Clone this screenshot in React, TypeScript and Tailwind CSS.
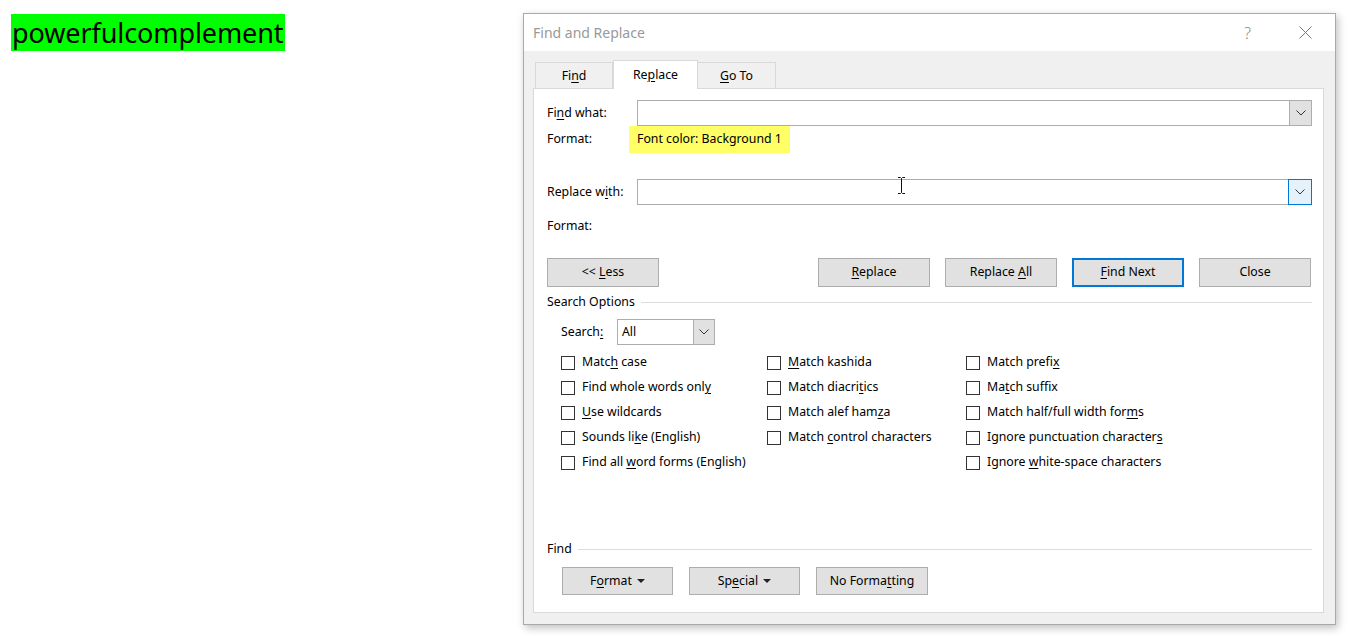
import React from "react";

const U = ({ children }: { children: React.ReactNode }) => (
  <span className="underline decoration-[1px] underline-offset-[2px]">{children}</span>
);

const Chevron = () => (
  <svg width="10" height="6" viewBox="0 0 10 6">
    <polyline points="0.5,0.5 5,5 9.5,0.5" fill="none" stroke="#333" strokeWidth="1" />
  </svg>
);

const Caret = () => (
  <svg width="8" height="4" viewBox="0 0 8 4" className="ml-[5px] inline-block">
    <polygon points="0,0 8,0 4,4" fill="#222" />
  </svg>
);

const Btn = ({
  children,
  w = "w-[112px]",
  h = "h-[29px]",
  focus = false,
}: {
  children: React.ReactNode;
  w?: string;
  h?: string;
  focus?: boolean;
}) => (
  <div
    className={`${w} ${h} flex items-center justify-center bg-[#e1e1e1] ${
      focus ? "border-2 border-[#0078d7]" : "border border-[#adadad]"
    } text-black`}
  >
    <span className="inline-flex items-center whitespace-pre">{children}</span>
  </div>
);

const Check = ({ children }: { children: React.ReactNode }) => (
  <div className="h-[25px] flex items-center">
    <div className="w-[14px] h-[14px] border border-[#333] bg-white mr-[7px] shrink-0" />
    <span className="text-black whitespace-pre">{children}</span>
  </div>
);

const Combo = ({ focus = false }: { focus?: boolean }) => (
  <div className="flex-1 h-[26px] flex border border-[#adadad] bg-white">
    <div className="flex-1" />
    <div
      className={`w-[22px] h-full flex items-center justify-center ${
        focus ? "bg-[#e5f1fb] outline outline-1 outline-[#0078d7]" : "bg-[#e1e1e1] border-l border-[#adadad]"
      }`}
    >
      <Chevron />
    </div>
  </div>
);

export default function App() {
  return (
    <div
      className="relative w-[1358px] h-[636px] bg-white overflow-hidden"
      style={{ fontFamily: '"Noto Sans", "Open Sans", sans-serif' }}
    >
      <div className="pl-[11px] pt-[14px]">
        <span className="inline-block bg-[#00ff00] h-[37px] leading-[37px] pl-[1px] pr-[2px] text-[27px] text-black tracking-[-0.1px]">
          powerfulcomplement
        </span>
      </div>

      <div className="absolute left-[523px] top-[13px] w-[813px] h-[612px] border border-[#a9a9a9] bg-[#f0f0f0] shadow-[2px_3px_8px_rgba(0,0,0,0.25)] flex flex-col">
        {/* title bar */}
        <div className="h-[37px] bg-white flex items-center pl-[9px] shrink-0">
          <span className="text-[14px] text-[#999]">Find and Replace</span>
          <div className="flex-1" />
          <span className="text-[16px] text-[#888] mr-[48px] font-light">?</span>
          <svg width="13" height="13" viewBox="0 0 13 13" className="mr-[23px]">
            <line x1="0.5" y1="0.5" x2="12.5" y2="12.5" stroke="#777" strokeWidth="1" />
            <line x1="12.5" y1="0.5" x2="0.5" y2="12.5" stroke="#777" strokeWidth="1" />
          </svg>
        </div>

        <div className="flex-1 flex flex-col pl-[9px] pr-[11px] pb-[11px] pt-[9px] text-[12.3px]">
          {/* tabs */}
          <div className="flex items-end pl-[2px] h-[29px] relative z-10 -mb-px">
            <div className="w-[78px] h-[26px] mb-px border border-b-0 border-[#d9d9d9] bg-[#f0f0f0] flex items-center justify-center pt-[2px]">
              <span className="whitespace-pre">
                Fi<U>n</U>d
              </span>
            </div>
            <div className="w-[85px] h-[29px] border border-b-0 border-[#d9d9d9] bg-white flex items-center justify-center">
              <span className="whitespace-pre">
                Re<U>p</U>lace
              </span>
            </div>
            <div className="w-[78px] h-[26px] mb-px border border-b-0 border-l-0 border-[#d9d9d9] bg-[#f0f0f0] flex items-center justify-center pt-[2px]">
              <span className="whitespace-pre">
                <U>G</U>o To
              </span>
            </div>
          </div>

          {/* panel */}
          <div className="flex-1 border border-[#d9d9d9] bg-white pl-[13px] pr-[11px] flex flex-col text-black">
            <div className="h-[11px]" />
            <div className="flex items-center h-[26px]">
              <div className="w-[90px] whitespace-pre">
                Fi<U>n</U>d what:
              </div>
              <Combo />
            </div>
            <div className="flex items-center h-[27px]">
              <div className="w-[82px]">Format:</div>
              <div className="h-[27px] px-[8px] bg-[#ffff66] flex items-center">Font color: Background 1</div>
            </div>
            <div className="h-[26px]" />
            <div className="flex items-center h-[26px]">
              <div className="w-[90px] whitespace-pre">
                Replace w<U>i</U>th:
              </div>
              <Combo focus />
            </div>
            <div className="h-[8px]" />
            <div className="flex items-center h-[26px]">Format:</div>
            <div className="h-[19px]" />
            <div className="flex items-center justify-between">
              <Btn>
                {"<< "}
                <U>L</U>ess
              </Btn>
              <div className="flex gap-[15px] pr-[1px]">
                <Btn>
                  <U>R</U>eplace
                </Btn>
                <Btn>
                  {"Replace "}
                  <U>A</U>ll
                </Btn>
                <Btn focus>
                  <U>F</U>ind Next
                </Btn>
                <Btn>Close</Btn>
              </div>
            </div>
            <div className="h-[6px]" />
            <div className="flex items-center h-[18px]">
              <span>Search Options</span>
              <div className="flex-1 h-px bg-[#dcdcdc] ml-[6px]" />
            </div>
            <div className="h-[8px]" />
            <div className="flex items-center h-[26px] pl-[14px]">
              <div className="w-[56px] whitespace-pre">
                Search<U>:</U>
              </div>
              <div className="w-[98px] h-[26px] flex border border-[#adadad] bg-white">
                <div className="flex-1 flex items-center pl-[4px]">All</div>
                <div className="w-[21px] h-full bg-[#e1e1e1] border-l border-[#adadad] flex items-center justify-center">
                  <Chevron />
                </div>
              </div>
            </div>
            <div className="h-[5px]" />
            <div className="flex pl-[14px]">
              <div className="w-[206px] flex flex-col">
                <Check>
                  Matc<U>h</U> case
                </Check>
                <Check>
                  Find whole words onl<U>y</U>
                </Check>
                <Check>
                  <U>U</U>se wildcards
                </Check>
                <Check>
                  Sounds li<U>k</U>e (English)
                </Check>
                <Check>
                  Find all <U>w</U>ord forms (English)
                </Check>
              </div>
              <div className="w-[199px] flex flex-col">
                <Check>
                  <U>M</U>atch kashida
                </Check>
                <Check>
                  Match diacri<U>t</U>ics
                </Check>
                <Check>
                  Match alef ham<U>z</U>a
                </Check>
                <Check>
                  Match <U>c</U>ontrol characters
                </Check>
              </div>
              <div className="flex flex-col">
                <Check>
                  Match prefi<U>x</U>
                </Check>
                <Check>
                  Ma<U>t</U>ch suffix
                </Check>
                <Check>
                  Match half/full width for<U>m</U>s
                </Check>
                <Check>
                  Ignore punctuation character<U>s</U>
                </Check>
                <Check>
                  Ignore <U>w</U>hite-space characters
                </Check>
              </div>
            </div>
            <div className="flex-1" />
            <div className="flex items-center h-[18px]">
              <span>Find</span>
              <div className="flex-1 h-px bg-[#dcdcdc] ml-[6px]" />
            </div>
            <div className="h-[9px]" />
            <div className="flex pl-[15px] gap-[16px]">
              <Btn w="w-[111px]" h="h-[28px]">
                F<U>o</U>rmat
                <Caret />
              </Btn>
              <Btn w="w-[111px]" h="h-[28px]">
                Sp<U>e</U>cial
                <Caret />
              </Btn>
              <Btn w="w-[112px]" h="h-[28px]">
                No Forma<U>t</U>ting
              </Btn>
            </div>
            <div className="h-[17px]" />
          </div>
        </div>
      </div>

      {/* I-beam cursor */}
      <svg width="9" height="17" viewBox="0 0 9 17" className="absolute left-[897px] top-[177px]">
        <path
          d="M1 0.5 H3.5 L4.5 1.5 L5.5 0.5 H8 M4.5 1.5 V15.5 M1 16.5 H3.5 L4.5 15.5 L5.5 16.5 H8"
          fill="none"
          stroke="#111"
          strokeWidth="1"
        />
      </svg>
    </div>
  );
}
